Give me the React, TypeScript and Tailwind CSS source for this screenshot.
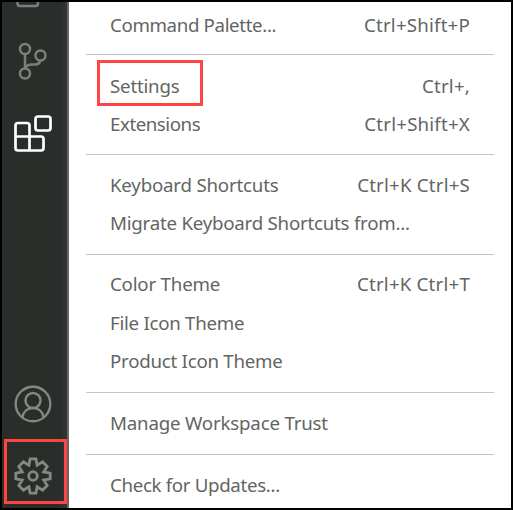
import React from "react";

function Row({ label, keys, ls = "" }: { label: string; keys?: string; ls?: string }) {
  return (
    <div className="flex h-[38px] shrink-0 items-center justify-between pr-[24px] pl-6 whitespace-pre">
      <span className={ls}>{label}</span>
      {keys && <span className="tracking-[0.2px]">{keys}</span>}
    </div>
  );
}

function Separator({ className = "my-[11px]" }: { className?: string }) {
  return <div className={"h-px shrink-0 bg-[#c2c5c5] " + className} />;
}

// One quarter of the gear outline, repeated around the centre.
const quarter = [
  [-2.9, -17.2],
  [2.9, -17.2],
  [4.1, -10.7],
  [9.6, -14.2],
  [14.2, -9.6],
  [10.7, -4.1],
];
const gearPoints = [0, 1, 2, 3]
  .flatMap((turn) =>
    quarter.map(([x, y]) => {
      let p = [x, y];
      for (let i = 0; i < turn; i++) p = [-p[1], p[0]];
      return `${19 + p[0]},${19 + p[1]}`;
    }),
  )
  .join(" ");

function Sidebar() {
  return (
    <div className="flex w-[67px] shrink-0 flex-col border-r-2 border-[#656565] bg-[linear-gradient(to_right,#2a2e2b_58px,#333535_65px)]">
      <svg className="h-[168px] w-[65px]" viewBox="2 2 65 168" fill="none" stroke="#7d7f7d" strokeWidth="2.5">
        <path d="M17.5 0V3.5Q17.5 6 20 6H35.5Q38 6 38 3.5V0" />
        <circle cx="25" cy="49" r="5" />
        <circle cx="40.5" cy="55.5" r="5" />
        <circle cx="25" cy="73.5" r="5" />
        <path d="M25 54V68.5M40.5 60.5C39.5 63.5 38 64.5 35 64.5H32C28.5 64.5 26 66 25 68.5" />
        <g stroke="#ffffff" strokeWidth="2.7">
          <path d="M18 123H27Q29.5 123 29.5 125.5V136.5H41Q43.5 136.5 43.5 139V148Q43.5 150.5 41 150.5H18Q15.5 150.5 15.5 148V125.5Q15.5 123 18 123M15.5 136.5H29.5V150.5" />
          <rect x="35.5" y="116.5" width="15" height="14" rx="2.5" />
        </g>
      </svg>
      <svg className="mt-auto h-[50px] w-[65px]" viewBox="2 379 65 50" fill="none" stroke="#858785" strokeWidth="2.4">
        <circle cx="33" cy="404" r="17.3" />
        <circle cx="33" cy="400.5" r="7.5" />
        <path d="M22.5 417C23.5 411.5 27.5 408 33 408S42.5 411.5 43.5 417" />
      </svg>
      <div className="mt-[10px] mb-[4px] ml-[2px] flex h-[65px] w-[63px] shrink-0 items-start border-[3px] border-[#ff4444] pt-[15px] pl-[7px]">
        <svg className="h-[38px] w-[38px] shrink-0" viewBox="0 0 38 38" fill="none" stroke="#858785" strokeWidth="2.8">
          <polygon points={gearPoints} />
          <circle cx="19" cy="19" r="4.3" />
        </svg>
      </div>
    </div>
  );
}

export default function App() {
  return (
    <div className="flex h-[510px] w-[513px] overflow-hidden border-2 border-black bg-white">
      <Sidebar />
      <div className="relative ml-[17px] flex w-[408px] flex-col pt-1 font-['Noto_Sans',sans-serif] text-[18.7px] leading-[26px] text-[#626562]">
        <Row label="Command Palette..." keys="Ctrl+Shift+P" ls="tracking-[-0.36px]" />
        <Separator className="mt-[10px] mb-[12px]" />
        <Row label="Settings" keys="Ctrl+," ls="tracking-[-0.2px]" />
        <Row label="Extensions" keys="Ctrl+Shift+X" ls="tracking-[-0.45px]" />
        <Separator />
        <Row label="Keyboard Shortcuts" keys="Ctrl+K Ctrl+S" ls="tracking-[-0.2px]" />
        <Row label="Migrate Keyboard Shortcuts from..." ls="tracking-[-0.23px]" />
        <Separator className="mt-[12px] mb-[10px]" />
        <Row label="Color Theme" keys="Ctrl+K Ctrl+T" ls="tracking-[-0.2px]" />
        <div className="h-px shrink-0" />
        <Row label="File Icon Theme" ls="tracking-[-0.27px]" />
        <Row label="Product Icon Theme" ls="tracking-[-0.25px]" />
        <Separator className="mt-[12px] mb-[11px]" />
        <Row label="Manage Workspace Trust" ls="tracking-[-0.19px]" />
        <Separator className="mt-[12px] mb-[11px]" />
        <Row label="Check for Updates..." ls="tracking-[-0.33px]" />
        <div className="absolute top-[58px] left-[11px] h-[46px] w-[106px] border-[3px] border-[#ff4444]" />
      </div>
    </div>
  );
}
